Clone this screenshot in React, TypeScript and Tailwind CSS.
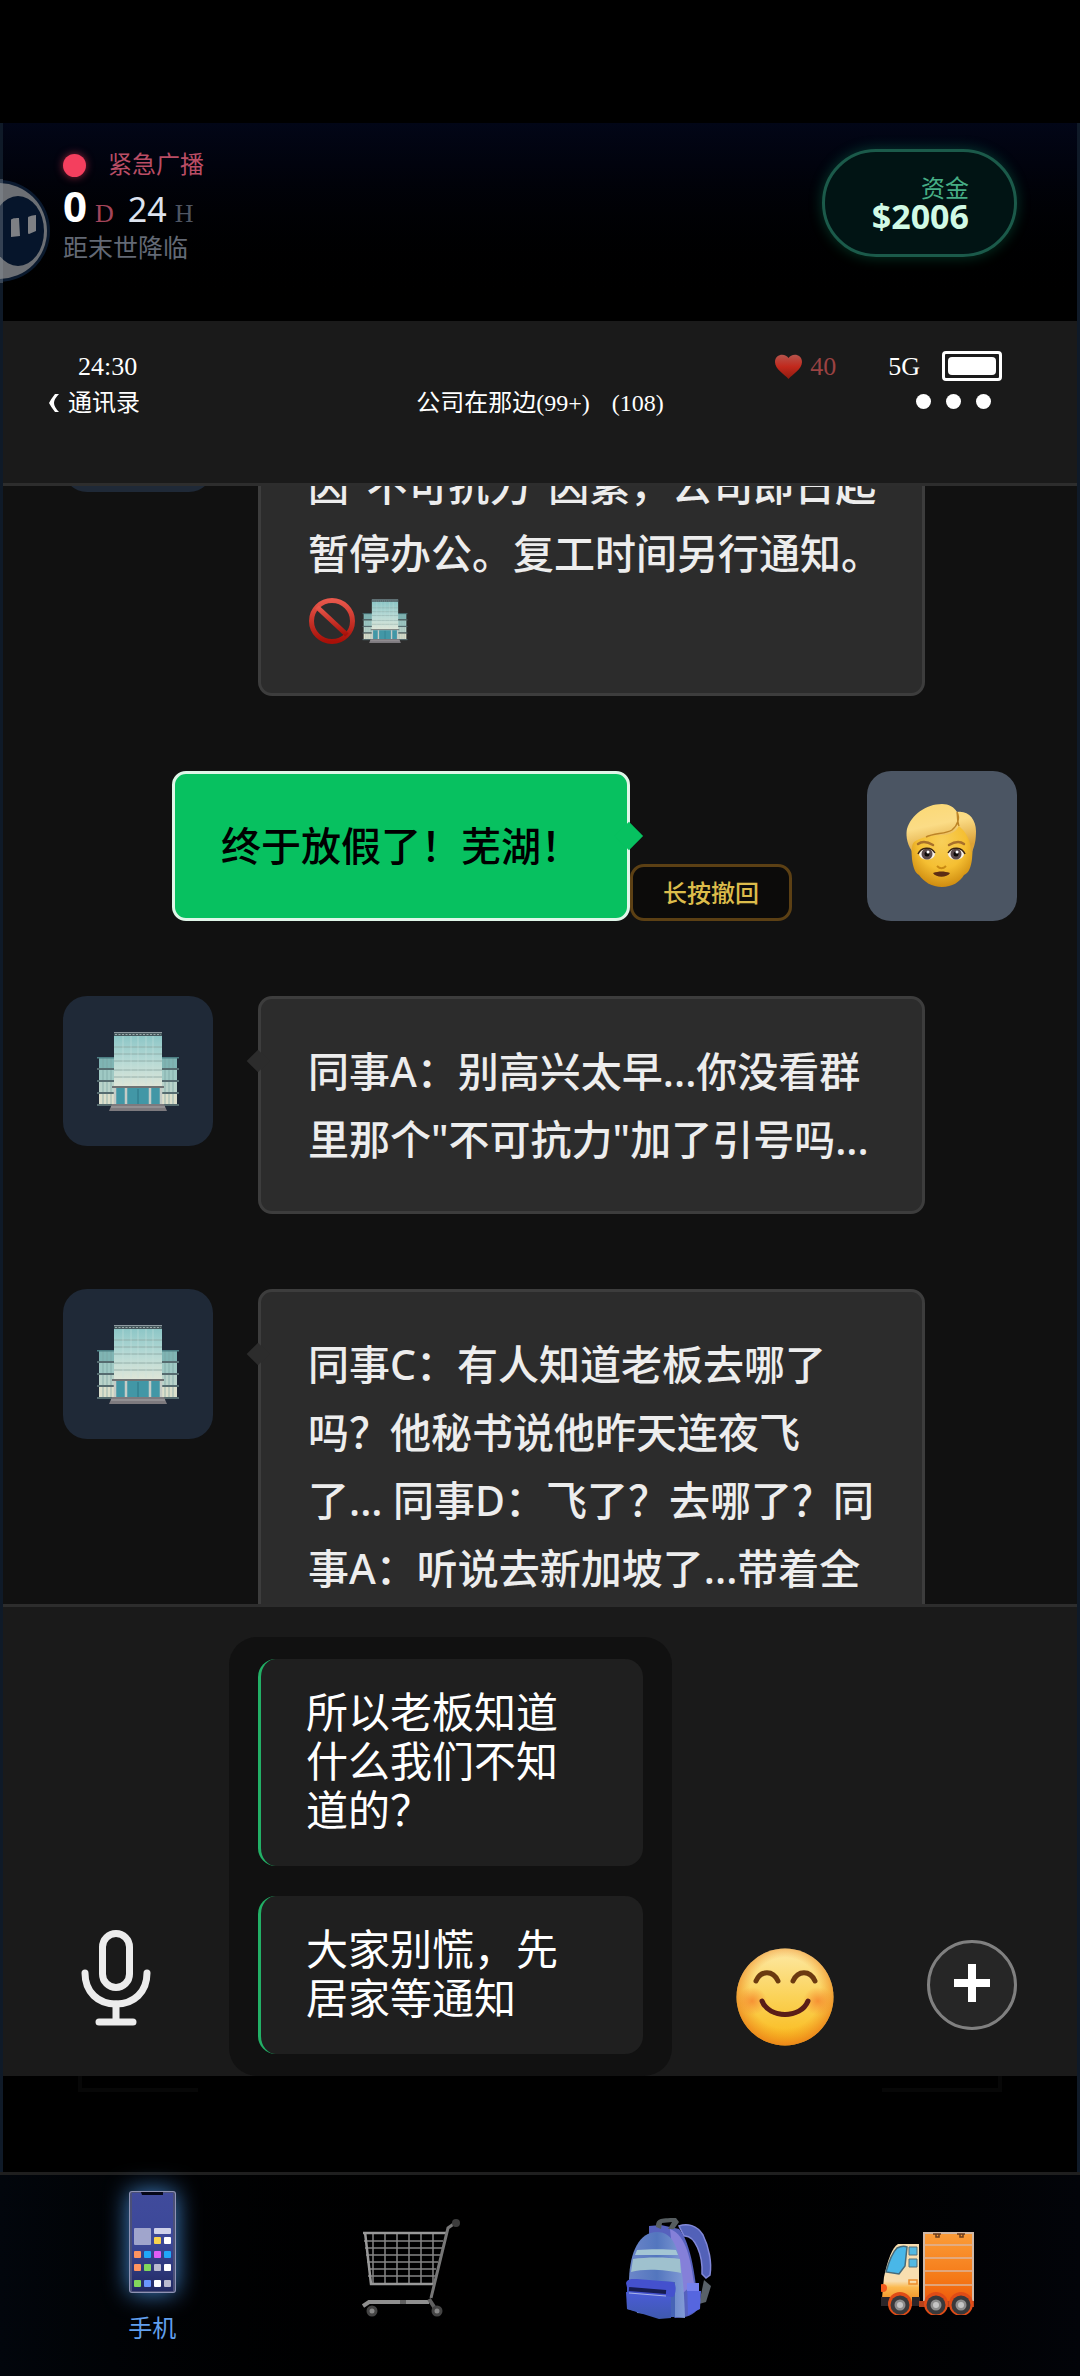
import type { ReactNode } from "react";

const SERIF = "font-['Liberation_Serif','Noto_Sans_CJK_SC',serif]";
const SANS = "font-['Noto_Sans','Noto_Sans_CJK_SC',sans-serif]";

// ---------- drawings ----------

function OfficeIcon({ className }: { className: string }) {
  return (
    <svg viewBox="0 0 84 80" className={className} aria-hidden="true">
      <defs>
        <linearGradient id="tower" x1="0" y1="0" x2="0" y2="1">
          <stop offset="0" stopColor="#86c3c4" />
          <stop offset="0.5" stopColor="#b3d8d4" />
          <stop offset="1" stopColor="#dfe6d8" />
        </linearGradient>
      </defs>
      {[0, 1, 2, 3].map((i) => (
        <g key={i}>
          <rect x="3" y={27 + i * 12} width="78" height="10" fill={["#7fb4b3", "#9fc9c4", "#b9d3ca", "#dcdfcb"][i]} />
          <path
            d={`M7 ${27 + i * 12}v10M11 ${27 + i * 12}v10M15 ${27 + i * 12}v10M69 ${27 + i * 12}v10M73 ${27 + i * 12}v10M77 ${27 + i * 12}v10`}
            stroke="#7ba3a3"
            strokeWidth="0.7"
          />
          <rect x="1" y={37 + i * 12} width="82" height="2" fill="#566c70" />
        </g>
      ))}
      <rect x="1" y="26" width="82" height="1.5" fill="#4d7f84" />
      <rect x="18" y="1" width="48" height="55" fill="url(#tower)" />
      <rect x="18" y="1" width="48" height="4" fill="#46585d" />
      <path d="M18 1.5H66" stroke="#8f9aa0" />
      <path d="M19 3.500H65" stroke="#9aa9aa" strokeDasharray="2 1.500" />
      <path d="M18 16H66M18 23H66M18 30H66M18 39H66M18 46H66" stroke="#8fa9a5" strokeWidth="0.9" />
      <path d="M27 5V54M35 5V54M42 5V54M50 5V54M57 5V54" stroke="#c8e2de" strokeWidth="0.5" />
      <rect x="16" y="55" width="52" height="2" fill="#6f7374" />
      <rect x="18" y="57" width="48" height="16" fill="#4297a6" />
      <path d="M19 57V73M30 57V73M54 57V73M65 57V73" stroke="#c5cbc6" strokeWidth="2.500" />
      <path d="M42 58V73" stroke="#2c7584" strokeWidth="1" />
      <path d="M16 73H68L71 80H13Z" fill="#7d7a7e" />
      <path d="M15 76H69" stroke="#a8a6a8" />
    </svg>
  );
}

function ForbiddenIcon() {
  return (
    <svg viewBox="0 0 48 48" className="size-12" aria-hidden="true">
      <defs>
        <linearGradient id="ban" x1="0" y1="0" x2="0" y2="1">
          <stop offset="0" stopColor="#e8574b" />
          <stop offset="1" stopColor="#a81008" />
        </linearGradient>
      </defs>
      <g fill="none" stroke="url(#ban)" strokeWidth="5">
        <circle cx="24" cy="24" r="20.5" />
        <path d="M9 10L39 38" />
      </g>
    </svg>
  );
}

function FaceIcon() {
  return (
    <svg viewBox="0 0 72 86" className="h-[86px] w-[72px]" aria-hidden="true">
      <defs>
        <radialGradient id="skin" cx="0.5" cy="0.35" r="0.65">
          <stop offset="0" stopColor="#f8cf5a" />
          <stop offset="0.6" stopColor="#f5bf32" />
          <stop offset="1" stopColor="#cf8c10" />
        </radialGradient>
        <linearGradient id="hair" x1="0" y1="0" x2="0.3" y2="1">
          <stop offset="0" stopColor="#fbd873" />
          <stop offset="0.5" stopColor="#fbdc86" />
          <stop offset="1" stopColor="#dca136" />
        </linearGradient>
      </defs>
      <path d="M5 42L6 56C7 64 9 70 13 72C18 79 26 84 36 84S54 79 58 72C63 70 65 64 66 56L67 42C66 22 50 14 36 14S6 22 5 42Z" fill="url(#skin)" />
      <path
        d="M6 48C0 40 0 30 1 26C5 12 20 1 36 1C43 1 48 4 51 9C62 7 70 16 70 28C70 36 69 44 65 50C65 40 62 33 57 27L53 23C50 29 44 32 36 32C24 32 14 35 8 39C6 41 6 44 6 48Z"
        fill="url(#hair)"
      />
      <path d="M51 9C54 15 52 22 46 27C40 31 28 30 20 34M53 23C51 19 52 13 51 9" fill="none" stroke="#bd8426" strokeWidth="1.5" />
      <path d="M12 41C16 38 22 39 27 42M43 42C48 39 54 38 58 41" fill="none" stroke="#a8702a" strokeWidth="2.5" strokeLinecap="round" />
      <ellipse cx="21" cy="51" rx="8" ry="5.5" fill="#f6f0ea" />
      <ellipse cx="50" cy="51" rx="8" ry="5.5" fill="#f6f0ea" />
      <circle cx="21" cy="51" r="5.500" fill="#5b4a4c" />
      <circle cx="50" cy="51" r="5.500" fill="#5b4a4c" />
      <circle cx="21" cy="51" r="2.500" fill="#0c0808" />
      <circle cx="50" cy="51" r="2.500" fill="#0c0808" />
      <circle cx="22" cy="49" r="1.500" fill="#fff" />
      <circle cx="51" cy="49" r="1.500" fill="#fff" />
      <path d="M12 51C15 44 25 43 29 50M42 50C46 43 56 44 59 51" fill="none" stroke="#3b2412" strokeWidth="1.5" />
      <path d="M31 63C34 66 37 66 40 63" fill="none" stroke="#c98a14" strokeWidth="2" />
      <path d="M27 70C33 68 38 68 44 70C41 75 30 75 27 70Z" fill="#5c2d14" />
    </svg>
  );
}

function SmileIcon() {
  return (
    <svg viewBox="0 0 98 98" className="size-[98px]" aria-hidden="true">
      <defs>
        <linearGradient id="smile" x1="0" y1="0" x2="0" y2="1">
          <stop offset="0" stopColor="#fde9a6" />
          <stop offset="0.5" stopColor="#fbd258" />
          <stop offset="1" stopColor="#f9b917" />
        </linearGradient>
        <radialGradient id="rim" cx="0.5" cy="0.46" r="0.56">
          <stop offset="0.65" stopColor="#ef8a1c" stopOpacity="0" />
          <stop offset="1" stopColor="#e8791a" stopOpacity="0.9" />
        </radialGradient>
        <radialGradient id="cheek">
          <stop offset="0" stopColor="#f5822c" stopOpacity="0.8" />
          <stop offset="1" stopColor="#f5822c" stopOpacity="0" />
        </radialGradient>
      </defs>
      <circle cx="49" cy="49" r="48.500" fill="url(#smile)" />
      <circle cx="49" cy="49" r="48.500" fill="url(#rim)" />
      <ellipse cx="16" cy="53" rx="15" ry="14" fill="url(#cheek)" />
      <ellipse cx="82" cy="53" rx="15" ry="14" fill="url(#cheek)" />
      <path d="M20 33C25 22 37 22 42 33M57 33C62 22 74 22 79 33" fill="none" stroke="#6b3a10" strokeWidth="5" strokeLinecap="round" />
      <path d="M26 53C33 71 65 71 72 53" fill="none" stroke="#5a1d18" strokeWidth="5" strokeLinecap="round" />
      <path d="M28 58C38 72 60 72 70 58C60 66 38 66 28 58Z" fill="#5a1d18" />
    </svg>
  );
}

function HeartIcon() {
  return (
    <svg viewBox="0 0 27 25" className="h-[25px] w-[27px]" aria-hidden="true">
      <defs>
        <linearGradient id="heart" x1="0" y1="0" x2="0" y2="1">
          <stop offset="0" stopColor="#b5544c" />
          <stop offset="0.5" stopColor="#c2281c" />
          <stop offset="1" stopColor="#8e1c10" />
        </linearGradient>
      </defs>
      <path d="M13.500 4C16-1 27-1 27 8C27 15 18 20 13.500 25C9 20 0 15 0 8C0-1 11-1 13.500 4Z" fill="url(#heart)" />
    </svg>
  );
}

function MicIcon() {
  return (
    <svg viewBox="0 0 70 96" className="h-24 w-[70px]" fill="none" stroke="#ececec" strokeWidth="7" strokeLinecap="round" aria-hidden="true">
      <rect x="21.500" y="3.500" width="27" height="54" rx="13.500" />
      <path d="M4 43C4 62 17 74 35 74S66 62 66 43" />
      <path d="M35 74V91M18 92H52" />
    </svg>
  );
}

const APP_TILES = [
  [34, 46, "#f8d34e"], [44, 46, "#ffffff"],
  [14, 60, "#ff9460"], [24, 60, "#20a8f8"], [34, 60, "#e25cf5"], [44, 60, "#20a8f8"],
  [14, 73, "#ff9460"], [24, 73, "#82d85c"], [34, 73, "#b9bad0"], [44, 73, "#ffffff"],
  [14, 89, "#82d85c"], [24, 89, "#6a97ff"], [34, 89, "#ffffff"], [44, 89, "#b9bad0"],
] as const;

function PhoneIcon() {
  return (
    <svg
      viewBox="9 0 47 102"
      className="h-[102px] w-[47px] drop-shadow-[0_0_12px_rgba(72,145,225,0.9)]"
      aria-hidden="true"
    >
      <defs>
        <linearGradient id="screen" x1="0" y1="0" x2="0" y2="1">
          <stop offset="0" stopColor="#404b9c" />
          <stop offset="0.5" stopColor="#3c4898" />
          <stop offset="1" stopColor="#222a63" />
        </linearGradient>
      </defs>
      <rect x="9" y="0" width="47" height="102" rx="3" fill="#8f93b5" />
      <rect x="10" y="1" width="45" height="100" rx="2" fill="#4b5078" />
      <rect x="12" y="2" width="41" height="98" fill="url(#screen)" />
      <path d="M21 1H43V4H22Z" fill="#050718" />
      <rect x="14" y="37" width="17" height="17" rx="1" fill="#a0a5cc" />
      <rect x="34" y="37" width="17" height="6" rx="1" fill="#cfd1ea" />
      {APP_TILES.map(([x, y, fill]) => (
        <rect key={`${x}-${y}`} x={x} y={y} width="7" height="7" rx="1" fill={fill} />
      ))}
    </svg>
  );
}

function CartIcon() {
  return (
    <svg viewBox="0 0 98 98" className="size-[98px]" fill="none" aria-hidden="true">
      <g stroke="#858585" strokeWidth="1.500">
        <path d="M2 22H81M3 29H80M4 36H78M5 43H76M6 50H74M6 57H73" />
        <path d="M11 15V64M23 15V64M35 15V64M47 15V64M59 15V64M71 15V64" />
      </g>
      <path d="M1 14H85M3 13L9 65H71" stroke="#999" strokeWidth="2.500" />
      <path d="M93 4L86 9L69 79" stroke="#777" strokeWidth="3" />
      <circle cx="94" cy="4" r="4" fill="#3c3c3c" />
      <path d="M1 87L7 83H67" stroke="#8f8f8f" strokeWidth="4" />
      <path d="M38 83H44M67 80L74 91" stroke="#606060" strokeWidth="4" />
      <circle cx="10" cy="92" r="4" stroke="#444" strokeWidth="3" fill="#888" />
      <circle cx="75" cy="92" r="4" stroke="#444" strokeWidth="3" fill="#888" />
    </svg>
  );
}

function BackpackIcon() {
  return (
    <svg viewBox="0 0 88 102" className="h-[102px] w-[88px]" aria-hidden="true">
      <defs>
        <linearGradient id="bag" x1="0" y1="0" x2="1" y2="0">
          <stop offset="0" stopColor="#6c86c9" />
          <stop offset="0.5" stopColor="#5376be" />
          <stop offset="1" stopColor="#829bd6" />
        </linearGradient>
        <linearGradient id="pocket" x1="0" y1="0" x2="0" y2="1">
          <stop offset="0" stopColor="#4a5cd8" />
          <stop offset="1" stopColor="#3f59ae" />
        </linearGradient>
      </defs>
      <path d="M54 9C62 6 72 8 78 18C84 30 87 46 85 58L81 61L77 57C78 38 70 18 59 19Z" fill="#5261b8" stroke="#8188d8" strokeWidth="1.500" />
      <path d="M79 63L86 69L81 85L74 87Z" fill="#596169" />
      <path d="M24 20L24 9L36 8L54 12C63 22 70 48 73 91C70 98 60 101 50 101L26 80Z" fill="#5661bd" />
      <path d="M45 12C62 18 66 46 69 66L58 76L50 60Z" fill="#8580d9" />
      <path d="M31 10C31 2 34 1 51 1L54 5L49 12H43L47 5L37 6L36 12Z" fill="#565d60" />
      <path d="M4 62C5 35 14 15 32 15C52 15 58 40 60 101L12 96Z" fill="url(#bag)" />
      <path d="M12 33C24 32 42 32 51 33L53 38H10Z" fill="#a4c6d4" />
      <path d="M8 42C20 40 42 40 55 42L56 56C42 53 20 51 6 55Z" fill="#9fc1ce" />
      <path d="M6 62C20 64 34 64 50 65V100H34L2 92V68Z" fill="#4664b6" />
      <path d="M1 66C2 62 6 62 12 62L48 65C52 67 51 78 48 80L3 75Z" fill="#4451ce" />
      <path d="M1 75L46 80V101L34 102L2 92Z" fill="url(#pocket)" />
      <path d="M4 72L41 75" stroke="#161c50" strokeWidth="4" />
      <path d="M4 76L41 79" stroke="#a9b4e8" strokeWidth="1" />
      <path d="M62 66H74V74H76L75 92L63 98Z" fill="#5666df" />
      <path d="M62 66H74V74H62Z" fill="#7681ed" />
    </svg>
  );
}

function TruckIcon() {
  return (
    <svg viewBox="0 -12 94 95" className="h-[95px] w-[94px]" aria-hidden="true">
      <defs>
        <linearGradient id="cargo" x1="0" y1="0" x2="0" y2="1">
          <stop offset="0" stopColor="#fb9c38" />
          <stop offset="0.6" stopColor="#f57a18" />
          <stop offset="1" stopColor="#ee560b" />
        </linearGradient>
        <linearGradient id="cab" x1="0" y1="0" x2="0" y2="1">
          <stop offset="0.6" stopColor="#f8deb0" />
          <stop offset="0.7" stopColor="#fbb94f" />
          <stop offset="1" stopColor="#f28113" />
        </linearGradient>
      </defs>
      <rect x="42" y="0" width="51" height="74" fill="#d0b9a8" />
      <rect x="44" y="2" width="47" height="72" fill="url(#cargo)" />
      <path d="M43 13H92M43 26H92M43 39H92M43 53H92" stroke="#dcb49a" strokeWidth="1.500" />
      <path d="M52 2H60M55 2V5H58V2M76 2H84M79 2V5H82V2" fill="none" stroke="#6b3d1c" strokeWidth="1.500" />
      <path d="M1 66L3 45C7 27 11 16 17 12H38V74H1Z" fill="url(#cab)" />
      <path d="M16 16C20 14 24 14 26 15L24 34L18 42L5 40C8 29 12 20 16 16Z" fill="#49b7e8" stroke="#476a79" strokeWidth="1.500" />
      <path d="M28 15H36V23H28ZM28 27H36V35H28Z" fill="#53b9e2" stroke="#54717d" />
      <path d="M28 48H36V52H28Z" fill="none" stroke="#ed8d2a" strokeWidth="1.500" />
      <circle cx="2" cy="56" r="4" fill="#f35b1c" />
      <path d="M0 65H9V74H0ZM31 65H39V74H31Z" fill="#2b2528" />
      <path d="M38 69H93V75H38Z" fill="#b6421b" />
      {[19, 55, 80].map((cx) => (
        <g key={cx}>
          <circle cx={cx} cy="72" r="12" fill="#df4c17" />
          <circle cx={cx} cy="73" r="9.500" fill="#39393b" />
          <circle cx={cx} cy="73" r="5.500" fill="#8d8d8d" />
          <circle cx={cx} cy="73" r="3" fill="#c5c5c5" />
        </g>
      ))}
    </svg>
  );
}

// half hidden helper ball docked to the left edge
function FloatingBall() {
  return (
    <svg viewBox="0 0 52 104" className="absolute top-[179px] left-0 z-10 h-[104px] w-[52px]" aria-hidden="true">
      <circle cx="-1" cy="52" r="51" fill="#0d1f38" opacity="0.8" />
      <circle cx="-1" cy="52" r="48" fill="#6c6f74" />
      <ellipse cx="18" cy="52" rx="26" ry="35" fill="#06152b" />
      <path d="M11 41C11 40 13 39 19 39L20 57L11 58ZM28 39C28 37 31 37 36 36V52L29 55C28 55 28 54 28 53Z" fill="#7e8084" />
      <rect width="3" height="104" fill="#8d949e" opacity="0.350" />
    </svg>
  );
}

// ---------- chat ----------

function OfficeAvatar() {
  return (
    <div className="flex size-[150px] shrink-0 items-center justify-center rounded-[24px] bg-[#1f2937]">
      <OfficeIcon className="h-20 w-[84px]" />
    </div>
  );
}

function IncomingMessage({ lines }: { lines: string[] }) {
  return (
    <div className="flex items-start gap-[45px]">
      <OfficeAvatar />
      <div className="relative w-[667px] rounded-[14px] border-3 border-[#3d3d3d] bg-[#2c2c2c] px-[47px] py-[38px] text-[41px] leading-[68px] font-medium whitespace-nowrap text-[#ededed]">
        <span className="absolute top-[54px] -left-[11px] size-4 rotate-45 bg-[#2c2c2c]" />
        {lines.map((line) => (
          <p key={line}>{line}</p>
        ))}
      </div>
    </div>
  );
}

function ReplyOption({ text }: { text: string }) {
  return (
    <button
      type="button"
      className="rounded-[18px] border-l-3 border-[#22b066] bg-[#1f1f1f] px-[45px] pt-7 pb-8 text-left text-[42px] leading-[49px] text-white"
    >
      {text}
    </button>
  );
}

function NavItem({ name, label, children }: { name: string; label?: boolean; children: ReactNode }) {
  return (
    <button type="button" aria-label={name} className="flex flex-col items-center justify-center gap-5">
      {children}
      {label && <span className={`text-[24px] leading-8 text-[#62a0ee] ${SERIF}`}>{name}</span>}
    </button>
  );
}

export default function App() {
  return (
    <div className={`relative flex h-screen flex-col overflow-hidden bg-black pt-[123px] text-white ${SANS}`}>
      <FloatingBall />

      <div className="flex min-h-0 flex-1 flex-col border-x-3 border-[#0f1a28]">
        {/* countdown + money */}
        <header className="flex h-[198px] shrink-0 items-start justify-between bg-linear-to-b from-[#020617] to-black px-[60px] pt-[26px]">
          <div>
            <div className="flex h-8 items-center gap-[22px]">
              <span className="size-[23px] rounded-full bg-[#f43f5e] shadow-[0_0_8px_rgba(244,63,94,0.6)]" />
              <span className={`text-[24px] text-[#b94d65] ${SERIF}`}>紧急广播</span>
            </div>
            <div className="flex h-[52px] items-baseline leading-[50px]">
              <span className="text-[42px] font-bold">0</span>
              <span className={`ml-2 text-[26px] text-[#a3455a] ${SERIF}`}>D</span>
              <span className="ml-[14px] text-[34px] text-[#dde3ee]">24</span>
              <span className={`ml-2 text-[26px] text-[#4f5663] ${SERIF}`}>H</span>
            </div>
            <p className="text-[25px] leading-7 text-[#636975]">距末世降临</p>
          </div>
          <div className="flex h-[108px] w-[195px] flex-col items-end justify-center rounded-full border-3 border-[#1b5a4a] bg-[#011414] pr-[45px] shadow-[0_0_14px_rgba(16,185,129,0.3)]">
            <span className={`text-[24px] leading-[26px] text-[#46ae85] ${SERIF}`}>资金</span>
            <span className="text-[34px] leading-[28px] font-bold text-[#d1fae5]">$2006</span>
          </div>
        </header>

        {/* phone status bar + chat title */}
        <div className={`h-[165px] shrink-0 border-b-3 border-[#2d2d2d] bg-[#1a1a1a] pt-[30px] text-[26px] ${SERIF}`}>
          <div className="flex h-[30px] items-center justify-between px-[75px]">
            <span>24:30</span>
            <div className="flex items-center">
              <HeartIcon />
              <span className="ml-2 text-[#9b4242]">40</span>
              <span className="ml-[52px]">5G</span>
              <span className="ml-[22px] flex h-[30px] w-[60px] rounded-[4px] border-3 p-[3px]">
                <span className="flex-1 rounded-[4px] bg-white" />
              </span>
            </div>
          </div>
          <div className="mt-1 grid h-[34px] grid-cols-[1fr_auto_1fr] items-center px-[45px] text-[24px]">
            <button type="button" className="flex items-center gap-2 justify-self-start">
              <svg viewBox="0 0 12 18" className="h-[18px] w-[12px]" fill="white" aria-hidden="true">
                <path d="M11 0Q6 5 6 9Q6 13 11 18L7 18Q3 13 1 9Q3 5 7 0Z" />
              </svg>
              通讯录
            </button>
            <h1 className="flex gap-[22px]">
              <span>公司在那边(99+)</span>
              <span>(108)</span>
            </h1>
            <button type="button" aria-label="更多" className="flex gap-[15px] justify-self-end pr-[41px] pb-1">
              <span className="size-[15px] rounded-full bg-white" />
              <span className="size-[15px] rounded-full bg-white" />
              <span className="size-[15px] rounded-full bg-white" />
            </button>
          </div>
        </div>

        {/* message list, scrolled so the first one is cut off */}
        <main className="min-h-0 flex-1 overflow-hidden bg-[#111111] px-[60px]">
          <div className="-mt-[144px] flex flex-col gap-[75px]">
            <div className="flex items-start gap-[45px]">
              <OfficeAvatar />
              <div className="flex h-[354px] w-[667px] flex-col justify-end rounded-[14px] border-3 border-[#3d3d3d] bg-[#2c2c2c] px-[47px] py-[38px] text-[41px] leading-[68px] font-medium whitespace-nowrap text-[#ededed]">
                <p>因"不可抗力"因素，公司即日起</p>
                <p>暂停办公。复工时间另行通知。</p>
                <p className="flex h-[68px] items-center gap-[6px]">
                  <ForbiddenIcon />
                  <OfficeIcon className="h-[46px] w-[46px]" />
                </p>
              </div>
            </div>

            <div className="flex items-start justify-end gap-[75px]">
              <div className="flex items-end">
                <div className="relative rounded-[14px] border-3 border-[#dff6e8] bg-[#07c160] px-[46px] py-[38px] text-[40px] leading-[68px] font-medium whitespace-nowrap text-black">
                  终于放假了！芜湖！
                  <span className="absolute top-[52px] -right-[12px] size-[20px] rotate-45 bg-[#07c160]" />
                </div>
                <button
                  type="button"
                  className="h-[57px] w-[162px] rounded-[14px] border-3 border-[#5c4014] bg-[#0c0b0a] text-[24px] font-medium text-[#dcbc4b]"
                >
                  长按撤回
                </button>
              </div>
              <div className="flex size-[150px] shrink-0 items-center justify-center rounded-[24px] bg-[#4b5563]">
                <FaceIcon />
              </div>
            </div>

            <IncomingMessage lines={["同事A：别高兴太早...你没看群", "里那个\"不可抗力\"加了引号吗..."]} />
            <IncomingMessage
              lines={[
                "同事C：有人知道老板去哪了",
                "吗？他秘书说他昨天连夜飞",
                "了... 同事D：飞了？去哪了？同",
                "事A：听说去新加坡了...带着全",
              ]}
            />
          </div>
        </main>

        {/* reply bar */}
        <div className="flex shrink-0 items-end border-t-3 border-[#2d2d2d] bg-[#1a1a1a] pt-[30px] pr-[60px] pl-[78px]">
          <button type="button" aria-label="语音" className="mb-[50px]">
            <MicIcon />
          </button>
          <div className="ml-[78px] flex w-[443px] flex-col gap-[30px] rounded-[28px] bg-[#111111] px-[29px] py-[22px]">
            <ReplyOption text="所以老板知道什么我们不知道的？" />
            <ReplyOption text="大家别慌，先居家等通知" />
          </div>
          <div className="mb-[30px] flex flex-1 items-start justify-between pl-[64px]">
            <button type="button" aria-label="表情" className="pt-2">
              <SmileIcon />
            </button>
            <button
              type="button"
              aria-label="添加"
              className="flex size-[90px] items-center justify-center rounded-full border-3 border-[#808080] bg-[#262626]"
            >
              <svg viewBox="0 0 36 38" className="mb-1 h-[38px] w-9" stroke="white" strokeWidth="8" aria-hidden="true">
                <path d="M18 0V38M0 19H36" />
              </svg>
            </button>
          </div>
        </div>

        <div className="flex h-24 shrink-0 justify-between bg-black px-[75px]">
          <span className="h-4 w-[120px] border-b-4 border-l-4 border-[#070707]" />
          <span className="h-4 w-[120px] border-r-4 border-b-4 border-[#070707]" />
        </div>
      </div>

      <nav className="grid h-[204px] shrink-0 grid-cols-4 border-t-3 border-[#1f1f1f] bg-linear-to-r from-[#02060c] via-black to-[#020409] px-[23px] pb-4">
        <NavItem name="手机" label>
          <PhoneIcon />
        </NavItem>
        <NavItem name="商店">
          <CartIcon />
        </NavItem>
        <NavItem name="背包">
          <BackpackIcon />
        </NavItem>
        <NavItem name="货车">
          <TruckIcon />
        </NavItem>
      </nav>
    </div>
  );
}
